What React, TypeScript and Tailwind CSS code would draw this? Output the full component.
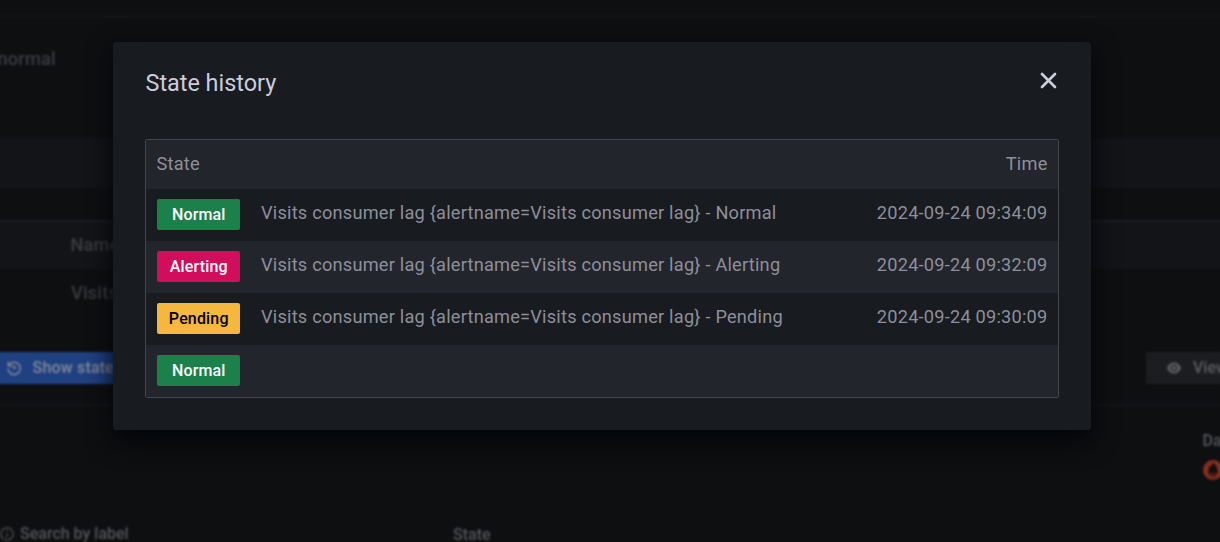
import type { ReactNode } from 'react';

type State = 'Normal' | 'Alerting' | 'Pending';

const badgeColors: Record<State, string> = {
  Normal: 'bg-[#1b804a] text-white',
  Alerting: 'bg-[#d10e5c] text-white',
  Pending: 'bg-[#f5b73d] text-black',
};

const history: { state: State; text: string; time: string }[] = [
  { state: 'Normal', text: 'Visits consumer lag {alertname=Visits consumer lag} - Normal', time: '2024-09-24 09:34:09' },
  { state: 'Alerting', text: 'Visits consumer lag {alertname=Visits consumer lag} - Alerting', time: '2024-09-24 09:32:09' },
  { state: 'Pending', text: 'Visits consumer lag {alertname=Visits consumer lag} - Pending', time: '2024-09-24 09:30:09' },
  { state: 'Normal', text: '', time: '' },
];

function Badge({ state }: { state: State }) {
  return (
    <span className={`flex h-[31px] w-[83px] items-center justify-center rounded-[2px] pl-[0.5px] text-[16px] font-medium tracking-[0.16px] ${badgeColors[state]}`}>
      {state}
    </span>
  );
}

function Label({ children }: { children: ReactNode }) {
  return <span className="block text-[16px] leading-5 font-medium text-[#55565b]">{children}</span>;
}

function Backdrop() {
  return (
    <div className="flex h-[546px] flex-col bg-[#0e0f11] text-[18.2px] text-[#3c3d42] blur-[1px]" aria-hidden="true">
      <div className="h-[17px] shrink-0 border-b-2 border-[#15161a]" />
      <div className="flex h-[121px] shrink-0 items-start pt-[30px]">
        <span className="-ml-[2.5px] leading-6 font-medium tracking-[0.2px]">normal</span>
      </div>
      <div className="-mx-1 h-[50px] shrink-0 bg-[#131418]" />
      <div className="h-8 shrink-0" />
      <div className="-mx-1 flex h-[49px] shrink-0 items-start border-t-2 border-[#1c1d21] bg-[#131418] pt-[11px] pl-[74.5px]">
        <span className="leading-6 font-medium tracking-[0.2px]">Name</span>
      </div>
      <div className="flex h-[83px] shrink-0 items-start pt-3 pl-[71px]">
        <span className="leading-6 font-medium tracking-[0.2px]">Visits</span>
      </div>
      <div className="-mx-1 flex h-[54px] shrink-0 items-start justify-between border-b-2 border-[#15161a]">
        <div className="flex h-8 w-[174px] items-center gap-[11px] bg-[#1f4081] pl-[9.5px] text-[16px] font-medium tracking-[0.2px] whitespace-nowrap text-[#848a98]">
          <svg className="size-[16px] shrink-0" viewBox="0 0 18 18" fill="none" stroke="currentColor" strokeWidth="1.7" strokeLinecap="round" strokeLinejoin="round">
            <path d="M2.500 2.500v4h4M3.200 6a6.900 6.900 0 1 1-.9 4.200M9 6.500v2.800h1.800" />
          </svg>
          Show state history
        </div>
        <div className="flex h-8 w-[78px] items-center gap-[11px] bg-[#1c1d20] pl-[20px] text-[16px] font-medium whitespace-nowrap text-[#5c5d62]">
          <svg className="h-4 w-4 shrink-0" viewBox="0 0 16 16">
            <path fill="currentColor" fillRule="evenodd" d="M1 8C2.4 4.2 5 2.500 8 2.500S13.600 4.200 15 8c-1.400 3.800-4 5.500-7 5.500S2.400 11.800 1 8Zm3.700 0a3.300 3.300 0 1 0 6.600 0 3.300 3.300 0 0 0-6.600 0Z" />
            <circle cx="8" cy="8" r="2.300" fill="currentColor" />
          </svg>
          View
        </div>
      </div>
      <div className="flex h-[118px] shrink-0 flex-col items-end pt-[25px]">
        <div className="flex w-[17.500px] flex-col gap-[8.500px] whitespace-nowrap">
          <Label>Data source</Label>
          <svg className="h-5 w-5" viewBox="0 0 20 20">
            <circle cx="10" cy="10" r="10" fill="#8a2f1b" />
            <path fill="#120f10" d="M10 2.500c.8 1.700 4.200 3 4.200 6 0 1.700 1 2.500.8 4.500H5c-.2-2 .8-2.800.8-4.500 0-1.200.7-2.300 1.500-3.300.1 1 .5 1.200.8 1.500.8-1.500.7-2.700 1.900-4.200ZM5.500 13.800h9v1.200h-9zM7 16h6c-.6 1.600-5.400 1.600-6 0Z" />
          </svg>
        </div>
      </div>
      <div className="flex h-5 shrink-0">
        <div className="flex w-[453px] items-center gap-[6px]">
          <svg className="size-[14px]" viewBox="0 0 14 14" fill="none" stroke="#55565b" strokeWidth="1.300">
            <circle cx="7" cy="7" r="6.200" />
            <path d="M7 6.300v4M7 3.500v1.300" />
          </svg>
          <Label>Search by label</Label>
        </div>
        <div className="pt-px"><Label>State</Label></div>
      </div>
    </div>
  );
}

export default function App() {
  return (
    <main className="relative h-[542px] w-[1220px] overflow-hidden bg-[#0e0f11] font-[Roboto,sans-serif]">
      <Backdrop />
      <section role="dialog" aria-labelledby="history-title" className="absolute top-[42px] left-[113px] h-[388px] w-[978px] rounded-[3px] bg-[#181b1f] px-8 shadow-[0_10px_26px_#010409]">
        <header className="flex h-[97px] items-start justify-between pt-[26px]">
          <h1 id="history-title" className="pl-[0.5px] text-[23.4px] leading-[30px] text-[#ccccdc]">State history</h1>
          <button aria-label="Close" className="mt-[4px] mr-[2px] flex size-[17px] items-center justify-center text-[#ccccdc]">
            <svg className="size-[17px]" viewBox="0 0 17 17" fill="none" stroke="currentColor" strokeWidth="2.700" strokeLinecap="round">
              <path d="m2 2 13 13M15 2 2 15" />
            </svg>
          </button>
        </header>
        <div className="rounded-[2px] border border-[#44464c] text-[18.2px] leading-[27px] tracking-[0.22px] text-[#8e8f9b]">
          <div className="flex h-[49px] items-start justify-between bg-[#22252b] pt-[10px] pr-[10.500px] pl-[10.500px]">
            <span>State</span>
            <span>Time</span>
          </div>
          {history.map((item, i) => (
            <div key={i} className={`flex h-[52px] items-start pt-[10px] pr-[10.500px] pl-[11px] ${i % 2 ? 'bg-[#22252b]' : 'bg-[#181b1f]'}`}>
              <Badge state={item.state} />
              <span className="ml-[21px] flex-1">{item.text}</span>
              <span>{item.time}</span>
            </div>
          ))}
        </div>
      </section>
    </main>
  );
}
